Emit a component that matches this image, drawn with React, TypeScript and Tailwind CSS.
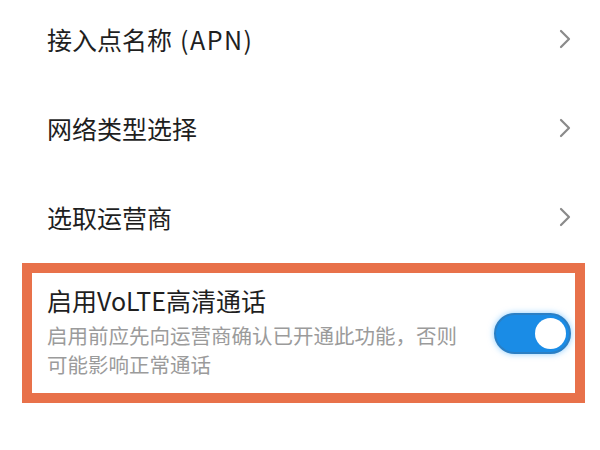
import React from "react";

const font = { fontFamily: '"Noto Sans CJK SC", "Noto Sans", sans-serif' };

function Chevron() {
  return (
    <svg width="12" height="20" viewBox="0 0 12 20" fill="none">
      <polyline points="2,2 10,10 2,18" stroke="#8a8a8a" strokeWidth="2.2" strokeLinecap="round" strokeLinejoin="round" />
    </svg>
  );
}

function Row({ children }: { children: React.ReactNode }) {
  return (
    <div className="h-[89px] flex items-center justify-between pl-[47px] pr-[29px]">
      <span className="text-[25px] leading-[34px] text-[#1f1f1f]">{children}</span>
      <Chevron />
    </div>
  );
}

export default function App() {
  return (
    <div className="w-[600px] h-[450px] bg-white overflow-hidden" style={font}>
      <div className="-mt-[6px] flex flex-col">
        <Row>
          接入点名称<span className="ml-[8px] tracking-[1.5px]">(APN)</span>
        </Row>
        <Row>网络类型选择</Row>
        <Row>选取运营商</Row>
      </div>
      <div className="ml-[22px] mt-[2px] w-[563px] h-[140px] border-[10px] border-[#e8714a] flex items-center justify-between pl-[15px] pr-[4px]">
        <div className="flex flex-col -mt-[5px]">
          <span className="text-[25px] leading-[34px] text-[#1f1f1f]">启用VoLTE高清通话</span>
          <span className="mt-[4px] text-[20.5px] leading-[29px] text-[#9b9b9b]">
            启用前应先向运营商确认已开通此功能，否则
            <br />
            可能影响正常通话
          </span>
        </div>
        <div className="w-[77px] h-[41px] rounded-full bg-[#1a8ce6] border-2 border-[#2b7fc4] shadow-[0_0_6px_rgba(60,170,255,0.6)] flex items-center justify-end pr-[3px]">
          <div className="w-[31px] h-[31px] rounded-full bg-white" />
        </div>
      </div>
    </div>
  );
}
